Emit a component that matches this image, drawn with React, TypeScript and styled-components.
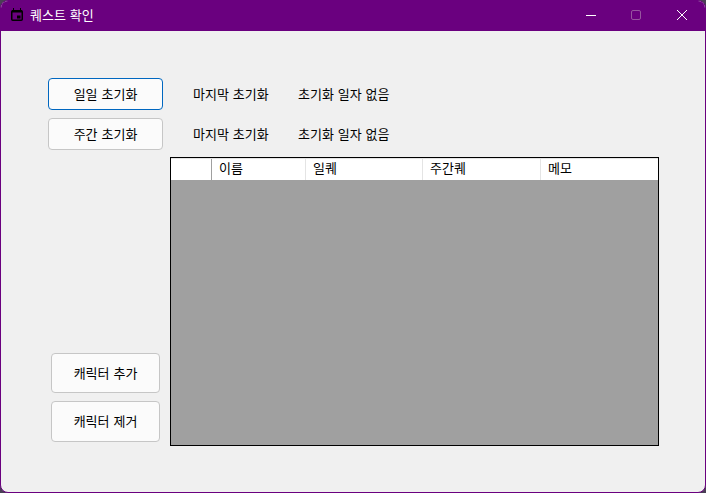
import { ReactElement } from 'react'
import styled, { createGlobalStyle } from 'styled-components'

const GlobalStyle = createGlobalStyle`
  html, body {
    margin: 0;
    padding: 0;
    background: #4a3f55;
  }
  body {
    font-family: "Noto Sans CJK KR", "Noto Sans", sans-serif;
    font-size: 13px;
    word-spacing: 1px;
    color: #000;
  }
`

const Window = styled.div`
  box-sizing: border-box;
  width: 706px;
  height: 493px;
  display: flex;
  flex-direction: column;
  background: #f0f0f0;
  border: 1px solid #6a007f;
  border-radius: 8px;
  overflow: hidden;
`

const TitleBar = styled.div`
  flex: none;
  height: 30px;
  display: flex;
  align-items: center;
  background: #6a007f;
  color: #fff;
  padding-left: 10px;
`

const TitleIcon = styled.svg`
  flex: none;
  margin-bottom: 3px;
`

const TitleText = styled.span`
  margin-left: 7px;
  line-height: 16px;
  margin-bottom: 2px;
`

const WindowButtons = styled.div`
  margin-left: auto;
  display: flex;
  height: 100%;
  padding-right: 1px;
`

const WindowButton = styled.div`
  box-sizing: border-box;
  width: 45px;
  padding-bottom: 2px;
  padding-right: 1px;
  display: flex;
  align-items: center;
  justify-content: center;

  &:last-child {
    padding-right: 0;
    padding-left: 1px;
  }
`

const Content = styled.div`
  flex: 1;
  display: flex;
  flex-direction: column;
  padding: 47px 46px 46px 47px;
`

const ResetRow = styled.div`
  display: flex;
  align-items: center;
  height: 32px;
  margin-bottom: 8px;
`

const Button = styled.button<{ $focused?: boolean }>`
  box-sizing: border-box;
  padding: 0 0 2px;
  font: inherit;
  word-spacing: inherit;
  color: #000;
  background: #fbfbfb;
  border: 1px solid ${p => (p.$focused ? '#0067c0' : '#c6c6c6')};
  border-radius: 4px;
`

const ResetButton = styled(Button)`
  width: 115px;
  height: 32px;
`

const Label = styled.span`
  margin: 0 0 2px 30px;
  width: 105px;
`

const Value = styled.span`
  margin-bottom: 2px;
`

const Body = styled.div`
  flex: 1;
  display: flex;
  margin-top: -1px;
`

const SideColumn = styled.div`
  width: 122px;
  display: flex;
  flex-direction: column;
  justify-content: flex-end;
  gap: 8px;
  padding: 0 0 4px 3px;
  box-sizing: border-box;
`

const SideButton = styled(Button)<{ $height: number }>`
  width: 109px;
  height: ${p => p.$height}px;
`

const Grid = styled.div`
  box-sizing: border-box;
  width: 489px;
  height: 289px;
  background: #a0a0a0;
  border: 1px solid #000;
`

const GridHeader = styled.div`
  display: flex;
  height: 22px;
  background: #fff;
  border-top: 1px solid #e4e4e4;
  box-sizing: border-box;
`

const HeaderCell = styled.div<{ $width: number; $strong?: boolean }>`
  box-sizing: border-box;
  width: ${p => p.$width}px;
  padding-left: 7px;
  line-height: 18px;
  border-right: 1px solid ${p => (p.$strong ? '#a0a0a0' : '#e4e4e4')};

  &:last-child {
    border-right: none;
    flex: 1;
  }
`

const CalendarIcon = () => (
  <TitleIcon width="12" height="13" viewBox="0 0 12 13">
    <path d="M2.5 0v3M9.5 0v3" stroke="#000" />
    <rect x="0.75" y="2.75" width="10.5" height="9.5" rx="1" fill="none" stroke="#000" strokeWidth="1.5" />
    <rect x="1" y="2" width="10" height="2.5" fill="#000" />
    <rect x="6" y="7.5" width="3.5" height="3" fill="#000" />
  </TitleIcon>
)

const App = (): ReactElement => {
  return (
    <Window>
      <GlobalStyle />
      <TitleBar>
        <CalendarIcon />
        <TitleText>퀘스트 확인</TitleText>
        <WindowButtons>
          <WindowButton>
            <svg width="10" height="10" viewBox="0 0 10 10">
              <path d="M0 5.5h10" stroke="#fff" />
            </svg>
          </WindowButton>
          <WindowButton>
            <svg width="10" height="10" viewBox="0 0 10 10">
              <rect x="0.5" y="0.5" width="9" height="9" rx="1.5" fill="none" stroke="#96559f" />
            </svg>
          </WindowButton>
          <WindowButton>
            <svg width="10" height="10" viewBox="0 0 10 10">
              <path d="M0 0l10 10M10 0L0 10" stroke="#fff" />
            </svg>
          </WindowButton>
        </WindowButtons>
      </TitleBar>
      <Content>
        <ResetRow>
          <ResetButton $focused>일일 초기화</ResetButton>
          <Label>마지막 초기화</Label>
          <Value>초기화 일자 없음</Value>
        </ResetRow>
        <ResetRow>
          <ResetButton>주간 초기화</ResetButton>
          <Label>마지막 초기화</Label>
          <Value>초기화 일자 없음</Value>
        </ResetRow>
        <Body>
          <SideColumn>
            <SideButton $height={40}>캐릭터 추가</SideButton>
            <SideButton $height={41}>캐릭터 제거</SideButton>
          </SideColumn>
          <Grid>
            <GridHeader>
              <HeaderCell $width={41} $strong />
              <HeaderCell $width={94}>이름</HeaderCell>
              <HeaderCell $width={117}>일퀘</HeaderCell>
              <HeaderCell $width={118}>주간퀘</HeaderCell>
              <HeaderCell $width={117}>메모</HeaderCell>
            </GridHeader>
          </Grid>
        </Body>
      </Content>
    </Window>
  )
}

export default App
